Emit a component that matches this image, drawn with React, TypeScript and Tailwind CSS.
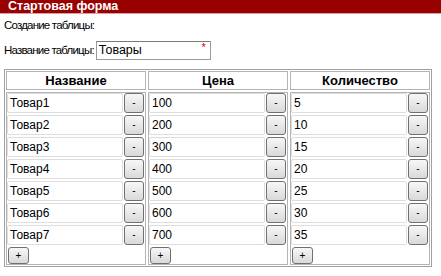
import React from "react";

const names = ["Товар1", "Товар2", "Товар3", "Товар4", "Товар5", "Товар6", "Товар7"];
const prices = ["100", "200", "300", "400", "500", "600", "700"];
const qty = ["5", "10", "15", "20", "25", "30", "35"];

function Btn({ label, w = "w-[20px]", h = "h-[20px]" }: { label: string; w?: string; h?: string }) {
  return (
    <div
      className={`${w} ${h} shrink-0 flex items-center justify-center rounded-[3px] border border-[#707070] bg-linear-to-b from-[#f7f7f7] to-[#d9d9d9] text-[10px] leading-none text-black`}
    >
      {label}
    </div>
  );
}

function Column({ title, values }: { title: string; values: string[] }) {
  return (
    <div className="flex flex-col gap-[2px]">
      <div className="h-[19px] border border-[#b4b4b4] flex items-center justify-center text-[13px] font-bold leading-none text-black">
        {title}
      </div>
      <div className="border border-[#b4b4b4] flex flex-col gap-[2px] pr-[1px] pb-[1px] h-[173px]">
        {values.map((v) => (
          <div key={v} className="flex gap-[1px] h-[20px]">
            <div className="flex-1 h-[20px] border border-[#dedede] rounded-[2px] flex items-center pl-[2px] text-[12px] text-black">
              {v}
            </div>
            <Btn label="-" />
          </div>
        ))}
        <div className="flex pl-[1px]">
          <Btn label="+" w="w-[21px]" h="h-[17px]" />
        </div>
      </div>
    </div>
  );
}

export default function App() {
  return (
    <div
      className="w-[441px] h-[276px] bg-white overflow-hidden"
      style={{ fontFamily: '"Liberation Sans", Arial, sans-serif' }}
    >
      <div className="h-[13px] bg-[#990000] flex items-center pl-[8px] text-white font-bold text-[12.5px] leading-none">
        Стартовая форма
      </div>
      <div className="h-[1px] bg-[#d9a0a0]" />
      <div className="mt-[4px] pl-[4px] h-[14px] text-[11.5px] tracking-[-0.8px] leading-[14px] text-black">
        Создание таблицы:
      </div>
      <div className="mt-[9px] pl-[4px] flex items-center gap-[2px] h-[19px]">
        <span className="text-[11.5px] tracking-[-0.8px] text-black leading-none">Название таблицы:</span>
        <div className="relative w-[115px] h-[19px] border border-[#9a9a9a] border-t-[#7a7a7a] flex items-center pl-[2px] text-[12.5px] text-black">
          Товары
          <span className="absolute right-[4px] top-[0px] text-[#e00000] text-[11px] leading-none">*</span>
        </div>
      </div>
      <div className="mt-[9px] ml-[4px] w-[428px] border border-[#a0a0a0] p-[1px] grid grid-cols-3 gap-x-[2px]">
        <Column title="Название" values={names} />
        <Column title="Цена" values={prices} />
        <Column title="Количество" values={qty} />
      </div>
    </div>
  );
}
